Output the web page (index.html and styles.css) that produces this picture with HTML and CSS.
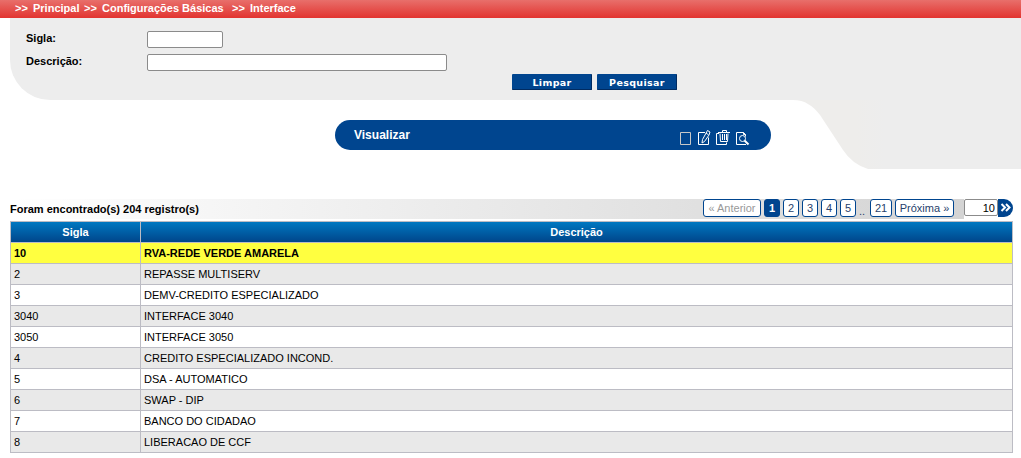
FILE: index.html
```html
<!DOCTYPE html>
<html lang="pt-BR">
<head>
<meta charset="utf-8">
<title>Interface</title>
<link rel="stylesheet" href="styles.css">
</head>
<body>
<nav class="crumbs"><span class="c1"><b>&gt;&gt;</b>Principal</span><span class="c2"><b>&gt;&gt;</b>Configurações Básicas</span><span class="c3"><b>&gt;&gt;</b>Interface</span></nav>
<form class="search">
  <div class="field"><label for="sigla">Sigla:</label><input id="sigla" class="short" type="text"></div>
  <div class="field"><label for="desc">Descrição:</label><input id="desc" class="long" type="text"></div>
  <div class="buttons"><button type="button">Limpar</button><button type="button">Pesquisar</button></div>
</form>
<div class="middle">
  <div class="view">
    <span class="view-title">Visualizar</span>
    <svg class="tools" width="72" height="18" viewBox="0 0 72 18" fill="none" stroke="#fff">
      <path stroke="#c8c8c8" d="M1.500 3.500h10v12h-10z"/>
      <path d="M26 3.500h-6.500v12h10v-7"/>
      <path d="M28.500 1.500l2.500 1.500-1 3-4.500 6.500-2.500 1.500.500-3.500zM27 4l2.500 1.800"/>
      <path d="M40 4.500h-2.500v11h10v-2M39 3.500h12M43.500 3v-1.500h4V3M41 4.500l.500 8h7l.500-8M43.500 5v6M45.500 5v6M47.500 5v6" />
      <path d="M66.500 7.500v-2l-2-2h-7v12h9.500M64.500 3.500v2h2"/>
      <circle cx="63.500" cy="9.500" r="3"/><path stroke-width="2" d="M65.500 11.500l4 4"/>
    </svg>
  </div>
  <svg class="curve" width="228" height="69" viewBox="0 0 228 69"><defs><linearGradient id="g"><stop offset="0" stop-color="#eeedeb"/><stop offset=".28" stop-color="#eeedeb"/><stop offset=".4" stop-color="#ededed"/></linearGradient></defs><path fill="url(#g)" d="M0 0C12 0 20 6 27 15L50 50Q59 64 75 69H228V0z"/></svg>
</div>
<div class="listbar">
  <div class="strip">
    <span class="count">Foram encontrado(s) 204 registro(s)</span>
    <div class="pages"><span class="off prev">« Anterior</span><span class="on num">1</span><span class="num">2</span><span class="num">3</span><span class="num">4</span><span class="num">5</span><i>..</i><span class="num21">21</span><span class="next">Próxima »</span></div>
  </div>
  <input class="size" type="text" value="10" aria-label="Registros"><button class="go" type="button" aria-label="Ir"><svg width="15" height="18" viewBox="0 0 15 18" fill="none" stroke="#fff" stroke-width="2"><path d="M3.500 5l3.500 3.500L3.500 12M8 5l3.500 3.500L8 12"/></svg></button>
</div>
<table>
<thead><tr><th class="key">Sigla</th><th>Descrição</th></tr></thead>
<tbody>
<tr class="sel"><td>10</td><td>RVA-REDE VERDE AMARELA</td></tr>
<tr><td>2</td><td>REPASSE MULTISERV</td></tr>
<tr><td>3</td><td>DEMV-CREDITO ESPECIALIZADO</td></tr>
<tr><td>3040</td><td>INTERFACE 3040</td></tr>
<tr><td>3050</td><td>INTERFACE 3050</td></tr>
<tr><td>4</td><td>CREDITO ESPECIALIZADO INCOND.</td></tr>
<tr><td>5</td><td>DSA - AUTOMATICO</td></tr>
<tr><td>6</td><td>SWAP - DIP</td></tr>
<tr><td>7</td><td>BANCO DO CIDADAO</td></tr>
<tr><td>8</td><td>LIBERACAO DE CCF</td></tr>
</tbody>
</table>
</body>
</html>
```

FILE: styles.css
```css
* { box-sizing: border-box; }
body { margin: 0; width: 1021px; height: 458px; overflow: hidden; background: #fff; color: #000; font: 11px/13px "Liberation Sans", Arial, sans-serif; }
.crumbs { display: flex; height: 18px; padding-left: 15px; line-height: 17px; color: #fff; font-weight: bold; white-space: nowrap; background: linear-gradient(#e86f6b, #e23430); }
.crumbs b { display: inline-block; width: 18px; }
.c1 { width: 69px; }
.c2 { width: 148px; }
.search { height: 82px; margin-left: 10px; padding-top: 13px; background: #ededed; border-bottom-left-radius: 40px; }
.field { display: flex; height: 23px; padding-left: 16px; font-weight: bold; }
.field label { width: 121px; padding-top: 1px; }
input { height: 17px; border: 1px solid #8b8b8b; border-radius: 2px; background: #fff; padding: 0 2px; }
.short { width: 76px; }
.long { width: 300px; }
.buttons { display: flex; gap: 5px; margin-top: -3px; padding-left: 502px; }
.buttons button { width: 80px; height: 16px; padding: 1px 0 0 1px; border: 0; border-right: 1px solid #002b61; border-bottom: 1px solid #002b61; border-radius: 1px; background: #00458f; color: #fff; font: bold 9.5px/15px "DejaVu Sans", Verdana, sans-serif; letter-spacing: .35px; }
.middle { display: flex; height: 99px; padding-left: 335px; }
.view { display: flex; width: 436px; height: 30px; margin: 20px 22px 0 0; padding-left: 19px; border-radius: 15px; background: #00458f; color: #fff; }
.view-title { width: 325px; font: bold 12px/30px "Liberation Sans", Arial, sans-serif; }
.tools { margin-top: 9px; }
.curve { display: block; }
.listbar { display: flex; height: 22px; padding-left: 10px; }
.strip { display: flex; justify-content: space-between; width: 954px; height: 20px; background: linear-gradient(90deg, #fff, #d4d4d4); }
.count { padding-top: 4px; font-weight: bold; white-space: nowrap; }
.pages { display: flex; gap: 3px; padding-right: 10px; color: #283f6c; }
.pages span { height: 18px; border: 1px solid #00458f; border-radius: 3px; background: #fff; line-height: 17px; text-align: center; white-space: nowrap; }
.pages .off { color: #999; }
.pages .on { background: #00458f; color: #fff; font-weight: bold; }
.prev { width: 58px; }
.num { width: 16px; }
.num21 { width: 22px; }
.next { width: 59px; }
.pages i { width: 8px; font-style: normal; padding-top: 6px; }
.size { width: 34px; text-align: right; font: 11px "Liberation Sans", Arial, sans-serif; }
.go { width: 15px; height: 18px; padding: 0; border: 0; border-radius: 0 9px 9px 0; background: #00458f; }
.go svg { display: block; }
table { width: 1003px; margin-left: 10px; border-collapse: collapse; table-layout: fixed; }
th, td { height: 21px; padding: 0 3px; border: 1px solid #bcbcc4; }
th { color: #fff; }
thead tr { background: linear-gradient(#0078c1, #004388); }
.key { width: 130px; }
tbody tr:nth-child(even) { background: #e9e9e9; }
tbody .sel { background: #ffff40; font-weight: bold; }
```
